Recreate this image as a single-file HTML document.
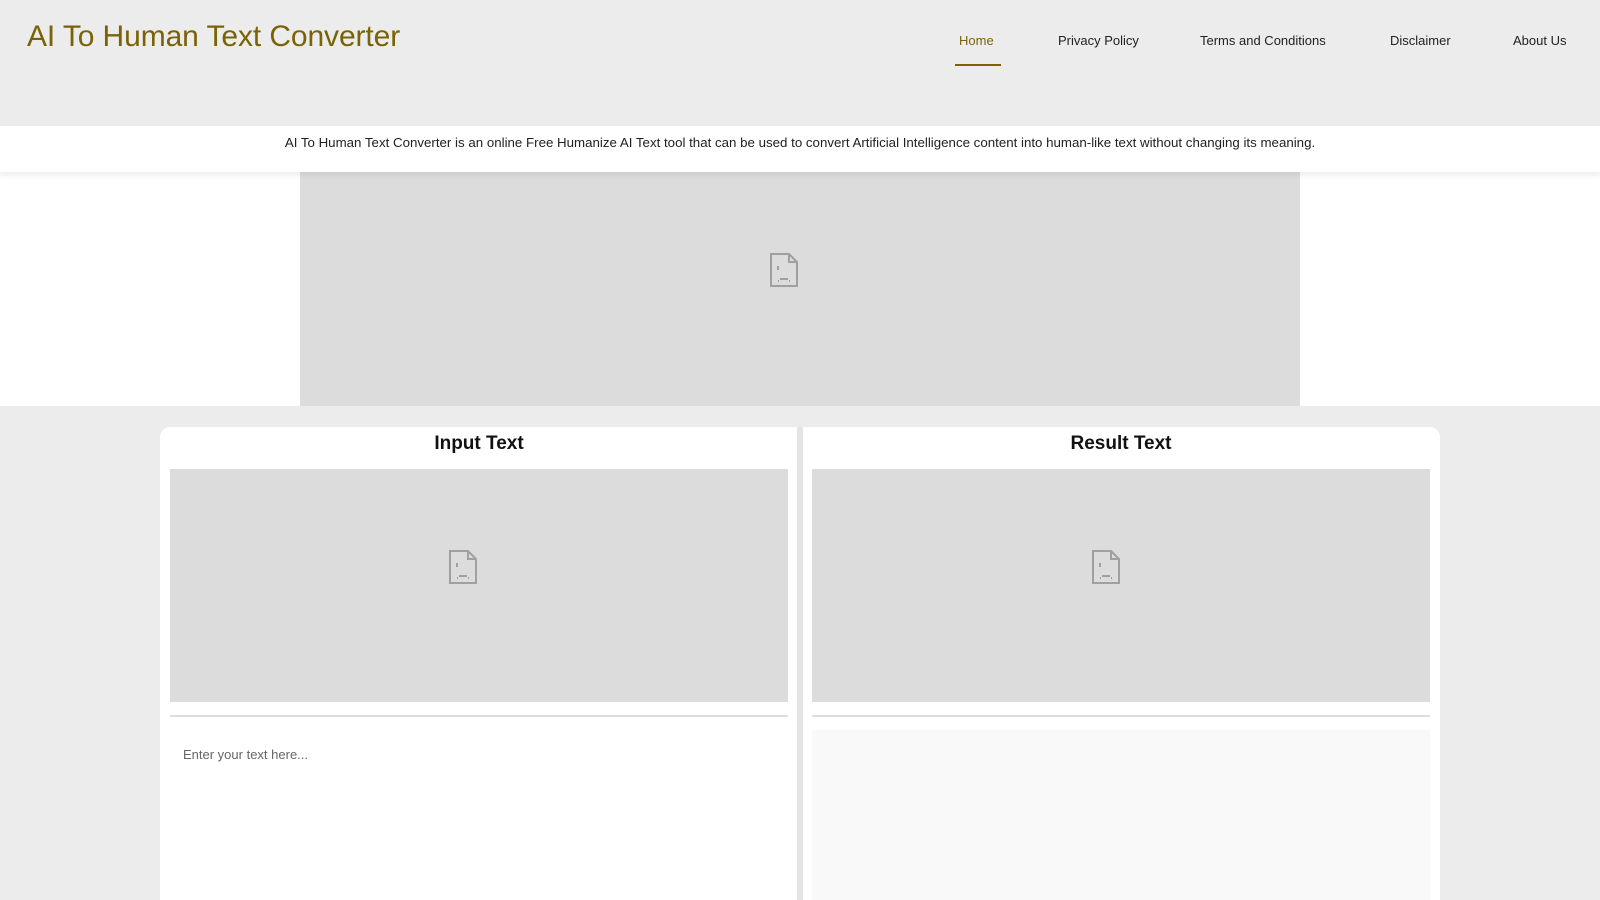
<!DOCTYPE html>
<html style="overflow:hidden;height:900px"><head><meta charset="utf-8"><style>
*{box-sizing:border-box;margin:0;padding:0}
body{width:1600px;height:900px;overflow:hidden;background:#ececec;font-family:"Liberation Sans",sans-serif;color:#222;position:relative}
.hdr{height:126px;background:#ececec;position:relative}
.title{position:absolute;left:27px;top:20px;font-size:30px;color:#7a6306;letter-spacing:-0.1px}
.nav a{position:absolute;top:33px;font-size:13px;color:#222;text-decoration:none}
.home{color:#7a6306!important}
.ul{position:absolute;left:955px;top:64px;width:46px;height:2px;background:#7a6306}
.desc{height:46px;background:#fff;text-align:center;font-size:13.3px;line-height:34px;box-shadow:0 3px 6px rgba(0,0,0,.08);position:relative;z-index:1}
.adwrap{height:234px;background:#fff;position:relative}
.ad{position:absolute;left:300px;width:1000px;top:0;height:234px;background:#dcdcdc}
.ico{position:absolute}
.card{position:absolute;left:160px;top:427px;width:1280px;height:473px;background:#fff;border-radius:10px 10px 0 0}
.sep{position:absolute;left:797px;top:427px;width:6px;height:473px;background:#e4e4e4}
h2{position:absolute;font-size:19px;font-weight:bold;top:433px;width:618px;text-align:center;color:#111}
.img{position:absolute;top:469px;width:618px;height:233px;background:#dcdcdc}
.line{position:absolute;top:715px;width:618px;height:2px;background:#ddd}
.ph{position:absolute;left:183px;top:747px;font-size:13px;color:#666}
.res{position:absolute;left:812px;top:730px;width:618px;height:170px;background:#f9f9f9}
</style></head><body>
<div class="hdr">
<div class="title">AI To Human Text Converter</div>
<div class="nav">
<a class="home" style="left:959px">Home</a>
<a style="left:1058px">Privacy Policy</a>
<a style="left:1200px">Terms and Conditions</a>
<a style="left:1390px">Disclaimer</a>
<a style="left:1513px">About Us</a>
</div>
<div class="ul"></div>
</div>
<div class="desc">AI To Human Text Converter is an online Free Humanize AI Text tool that can be used to convert Artificial Intelligence content into human-like text without changing its meaning.</div>
<div class="adwrap"><div class="ad"></div></div>
<svg class="ico" style="left:770px;top:253px" width="28" height="34" viewBox="0 0 28 34" fill="none" stroke="#a0a0a0" stroke-width="2"><path d="M1 1H19L27 9V33H1Z M19 1V9H27 M8 13V17 M10 26H18 M8 28H9 M19 28H20"/></svg>
<div class="card"></div>
<div class="sep"></div>
<h2 style="left:170px">Input Text</h2>
<h2 style="left:812px">Result Text</h2>
<div class="img" style="left:170px"></div>
<div class="img" style="left:812px"></div>
<svg class="ico" style="left:449px;top:550px" width="28" height="34" viewBox="0 0 28 34" fill="none" stroke="#a0a0a0" stroke-width="2"><path d="M1 1H19L27 9V33H1Z M19 1V9H27 M8 13V17 M10 26H18 M8 28H9 M19 28H20"/></svg>
<svg class="ico" style="left:1092px;top:550px" width="28" height="34" viewBox="0 0 28 34" fill="none" stroke="#a0a0a0" stroke-width="2"><path d="M1 1H19L27 9V33H1Z M19 1V9H27 M8 13V17 M10 26H18 M8 28H9 M19 28H20"/></svg>
<div class="line" style="left:170px"></div>
<div class="line" style="left:812px"></div>
<div class="ph">Enter your text here...</div>
<div class="res"></div>
</body></html>
